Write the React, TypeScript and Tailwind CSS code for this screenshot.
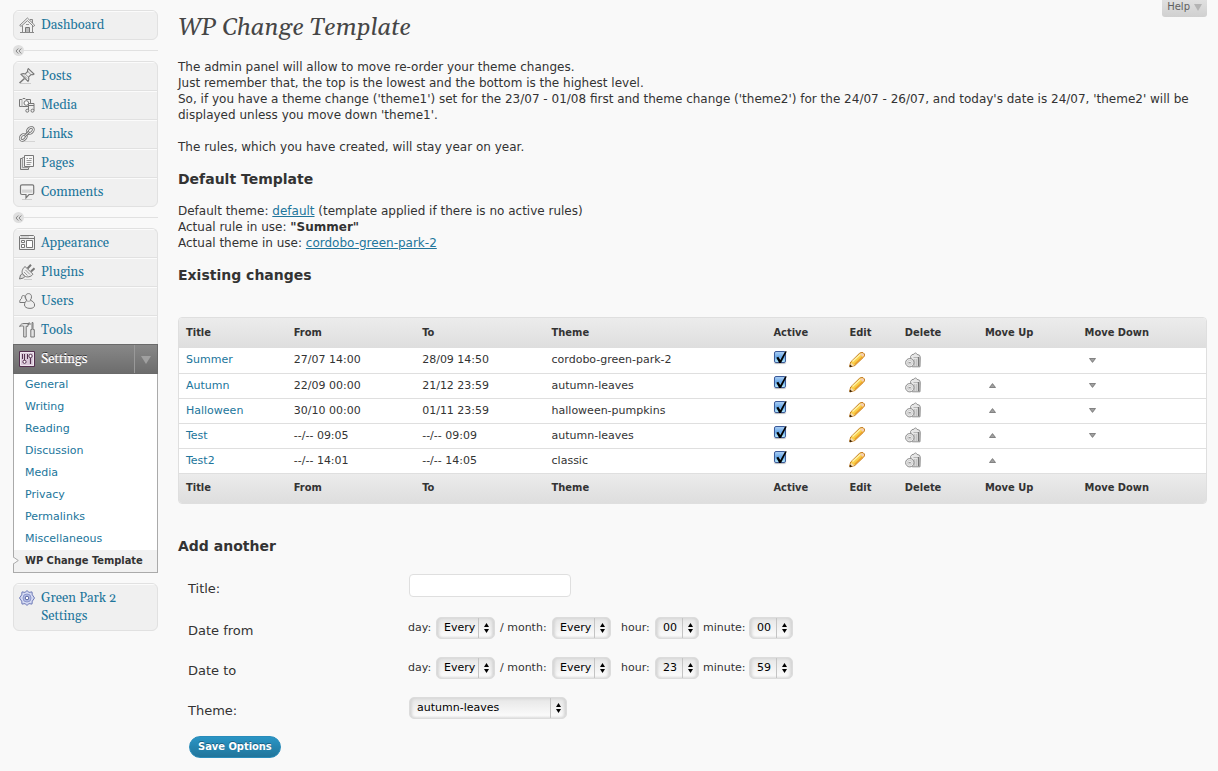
import type { ReactNode } from "react";

const ICON = "h-4 w-4 shrink-0";

function HomeIcon() {
  return (
    <svg viewBox="0 0 16 16" className={ICON} fill="none" stroke="#777" strokeWidth="1">
      <path d="M3.500 8.500V15M13.500 8.500V15M1 15.500h14" stroke="#888" />
      <path d="M11 2.500h2.500v4" fill="#ddd" stroke="#888" />
      <path d="M.7 8.400 8.400 1l7.400 7.400-1.300 1L8.400 3.600 2 9.400Z" fill="#f4f4f4" strokeWidth=".9" />
      <path d="M6.500 15V10.500h4V15" fill="#bbb" />
      <path d="M7 7.500h3" stroke="#999" />
    </svg>
  );
}

function PinIcon() {
  return (
    <svg viewBox="0 0 16 16" className={ICON} fill="none" stroke="#777" strokeWidth="1">
      <path d="M1 15.500h11" stroke="#ccc" />
      <path d="M5.500 10.500.5 15" strokeWidth="1.500" />
      <path d="M2 6.300c1.500-.9 3-.8 4.200-.4L8.700 3.500c-.3-1-.1-2 .6-2.900l5.700 5.400c-1 .8-2 .9-3 .6L9.500 9.200c.5 1.400.4 2.900-.5 4.200Z" fill="#eee" strokeWidth="1.100" />
      <path d="m6.200 6 3.300 3.200M9 3.700l2.900 2.800M5 7.500l3 3" stroke="#999" />
    </svg>
  );
}

function MediaIcon() {
  return (
    <svg viewBox="0 0 16 16" className={ICON} fill="none" stroke="#777" strokeWidth="1">
      <path d="M.5 2.500H3L4 1.500h2l1 1h4.500v7H.5Z" fill="#eee" />
      <path d="M3 2.500v7" stroke="#aaa" />
      <circle cx="7.300" cy="6" r="2.300" fill="#fff" />
      <path d="M9.500 13.500v-7h5.500v7M9.500 8.500H15" fill="#eee" />
      <circle cx="8.300" cy="13.700" r="1.500" fill="#eee" />
      <circle cx="13.500" cy="13.700" r="1.500" fill="#eee" />
    </svg>
  );
}

function LinkIcon() {
  return (
    <svg viewBox="0 0 16 16" className={ICON} fill="none">
      <path d="M3 15.500h13" stroke="#d4d4d4" />
      <g stroke="#777" strokeWidth="2.800">
        <ellipse cx="4.300" cy="11.300" rx="3.500" ry="2.400" transform="rotate(-45 4.300 11.300)" />
        <ellipse cx="11.300" cy="4.500" rx="3.500" ry="2.400" transform="rotate(-45 11.300 4.500)" />
      </g>
      <g stroke="#eee" strokeWidth="1">
        <ellipse cx="4.300" cy="11.300" rx="3.500" ry="2.400" transform="rotate(-45 4.300 11.300)" />
        <ellipse cx="11.300" cy="4.500" rx="3.500" ry="2.400" transform="rotate(-45 11.300 4.500)" />
      </g>
      <path d="m5.500 10.300 4.800-4.800" stroke="#777" strokeWidth="2.600" />
      <path d="m5.500 10.300 4.800-4.800" stroke="#e4e4e4" strokeWidth="1" />
    </svg>
  );
}

function PagesIcon() {
  return (
    <svg viewBox="0 0 16 16" className={ICON} fill="none" stroke="#777" strokeWidth="1">
      <path d="M1.500 3.500h8v11h-8Z" fill="#ddd" />
      <path d="M3.500 2.500h7v10h-7Z" fill="#e8e8e8" stroke="#999" />
      <path d="M5.500.5h9v11h-9Z" fill="#f7f7f7" />
      <path d="M7.500 3.500H9M10 3.500h3M7.500 5.500h5M7.500 7.500h5M7.500 9.500h4" stroke="#999" />
    </svg>
  );
}

function CommentIcon() {
  return (
    <svg viewBox="0 0 16 16" className={ICON} fill="none" stroke="#777" strokeWidth="1.200">
      <path d="M3 15.500h10" stroke="#ccc" strokeWidth="1" />
      <path d="M3 .8h10.500c.8 0 1.200.4 1.200 1.200v7c0 1-.4 1.500-1.400 1.500H10L7 14V10.500H3c-1 0-1.500-.5-1.500-1.500V2c0-.8.500-1.200 1.500-1.200Z" fill="#f2f2f2" />
      <path d="M3 5.500h10.500v3.300H3Z" fill="#d4d4d4" stroke="none" />
    </svg>
  );
}

function AppearanceIcon() {
  return (
    <svg viewBox="0 0 16 16" className={ICON} fill="none" stroke="#777" strokeWidth="1">
      <path d="M1.500.5h13l1 1v13H.5v-13Z" fill="#f0f0f0" />
      <path d="M1 3.500h14" />
      <path d="M2 2h8" stroke="#bbb" />
      <path d="M2.500 5.500h3v2h-3ZM2.500 9.500h3v3h-3ZM7.500 5.500h6v7h-6Z" fill="#fff" />
    </svg>
  );
}

function PluginIcon() {
  return (
    <svg viewBox="0 0 16 16" className={ICON} fill="none" stroke="#777" strokeWidth="1">
      <path d="M5 15.500h8" stroke="#ccc" />
      <path d="M.5 15 1.500 11l2-1.500 2.500 2.800L4.500 14Z" fill="#ddd" />
      <path d="M8.500 4.500 12 .8M12 7.500l3.500-3.200" strokeWidth="2" />
      <path d="M6 2.500 14 10.200C12 13 8 13.700 5.500 12L3.700 10C2.200 8 3.500 4.500 6 2.500Z" fill="#eee" />
      <path d="m6.500 6 4.500 4.500M5 8l3.500 3.500" stroke="#999" />
    </svg>
  );
}

function UsersIcon() {
  return (
    <svg viewBox="0 0 16 16" className={ICON} fill="#eee" stroke="#777" strokeWidth="1">
      <path d="M4.500 2.500c1.300 0 1.900 1 1.700 2.600 1 .8 1.500 2 1.300 4.400H.8C.4 8 1.300 6.200 2.700 5.300 2.400 3.500 3.200 2.500 4.500 2.500Z" />
      <path d="M9.500.6c1.900 0 3 1.300 3 3.200 0 1.400-.4 2.600-1.300 3.400C13.800 8 15.600 9.800 15.600 12c0 2-1.300 3.400-4.600 3.400S5.500 14 5.500 12c0-2 1-3.700 2.400-4.700-.9-.8-1.400-2-1.400-3.500 0-1.900 1.100-3.200 3-3.200Z" />
      <path d="M7.500 7.800c1.200.7 2.700.7 4 0" fill="none" stroke="#999" />
    </svg>
  );
}

function ToolsIcon() {
  return (
    <svg viewBox="0 0 16 16" className={ICON} fill="#e4e4e4" stroke="#777" strokeWidth="1">
      <path d="M.6 4.500C1.500 2.300 3 1.500 5 1.500h4v2.800H7.200V15H4.700V4.300C3 3.700 1.800 4 .6 4.500Z" />
      <path d="M9.500 3V1h1.500v2" />
      <path d="M13 .6h1v7h1.300V15h-3.500V7.600H13Z" />
    </svg>
  );
}

function SettingsIcon() {
  return (
    <svg viewBox="0 0 16 16" className={ICON} fill="none">
      <path d="M.5.5h15v15H.5Z" fill="#bda5bd" stroke="#54304f" />
      <path d="M1.500 1.500h13v13h-13Z" fill="#d9c8d9" stroke="#f0e6f0" />
      <path d="M5.500 3v7M3.500 3v5M8.500 3v5" stroke="#54304f" />
      <circle cx="5.500" cy="10.800" r="1.600" fill="#fff" stroke="#54304f" />
      <path d="M11.500 7v6" stroke="#54304f" strokeWidth="1.200" />
      <circle cx="11.500" cy="5" r="1.700" fill="#fff" stroke="#54304f" />
    </svg>
  );
}

function GearIcon() {
  return (
    <svg viewBox="0 0 16 16" className={ICON} fill="#d5daf2" stroke="#6f7bb8" strokeWidth="1">
      <path d="m8 .6 2 1.800 3-.5.300 2.900L15.500 8l-2.200 3.200-.3 2.900-3-.5L8 15.400l-2-1.800-3 .5-.3-2.900L.5 8l2.200-3.200L3 1.900l3 .5Z" />
      <circle cx="8" cy="8" r="4" fill="#b4bde6" stroke="#8d98cc" />
      <circle cx="8" cy="8" r="1.800" fill="#fff" stroke="#58649f" />
    </svg>
  );
}

function PencilIcon() {
  return (
    <svg viewBox="0 0 16 16" className="block h-4 w-4" fill="none">
      <path d="M10.300 1.500 11.800.6h2.200l1.500 1.500v1.700l-1 1.400-8.700 8.300-4.600 1.400-.6-.5 1.100-4.400Z" fill="#f9cf4a" stroke="#c07a24" strokeWidth="1" />
      <path d="m3.500 9.600 8-7.400" stroke="#fff3a8" strokeWidth="1.400" />
      <path d="m5.700 12.200 8.200-7.700" stroke="#eda02a" strokeWidth="1.300" />
      <path d="m11 2 1.200-.8h1.600l1.100 1.100v1.300l-1 1.300Z" fill="#f5cdb2" />
      <path d="m2 10.700 3.200 2.900-3.300.9-.8-.7Z" fill="#f6dcb0" />
      <path d="m.5 15.300.5-2.900 2.400 2.200Z" fill="#3a2408" />
    </svg>
  );
}

function TrashIcon() {
  return (
    <svg viewBox="0 0 16 16" className="block h-4 w-4" fill="none">
      <path d="M5.500 4.500 7 2.600l2-.4L10.500.7 12 2.400l2.500.8.8 2-.3 9.600H7.200Z" fill="#e6e6e6" stroke="#909090" />
      <path d="M8.500 5.500h5M9.200 7v7M11.200 7v7" stroke="#b5b5b5" />
      <path d="M13.600 5v9.300" stroke="#777" strokeWidth="1.500" />
      <circle cx="4.800" cy="10.700" r="4.200" fill="#ededed" stroke="#8a8a8a" />
      <circle cx="4.800" cy="10.700" r="2.400" stroke="#ccc" />
      <path d="M3.500 10.800h2.300" stroke="#777" />
    </svg>
  );
}

function Arrow({ dir }: { dir: "up" | "down" }) {
  return (
    <svg viewBox="0 0 7 5" className="block h-[5px] w-[7px]" fill="#a0a0a0" stroke="#707070" strokeWidth=".8">
      <path d={dir === "up" ? "M.5 4.500 3.500.6l3 3.900Z" : "M.5.5h6L3.500 4.400Z"} />
    </svg>
  );
}

const serif = "font-['Gelasio','DejaVu_Serif_Condensed',serif]";
const smallBold = "font-['DejaVu_Sans_Condensed','DejaVu_Sans',sans-serif] text-[11px] font-bold";

function MenuItem({ icon, label, last }: { icon: ReactNode; label: string; last?: boolean }) {
  return (
    <li className={last ? "" : "border-b border-[#e1e1e1]"}>
      <a href="#" className={`${serif} flex items-start gap-[6px] border-t border-[#fbfbfb] pr-2 pl-[5px] text-[13px] leading-[18px] text-[#21759b]`}>
        <span className="pt-[5px]">{icon}</span>
        <span className="pt-1 pb-[5px]">{label}</span>
      </a>
    </li>
  );
}

function Separator() {
  return (
    <div className="flex h-[21px] items-center">
      <button type="button" aria-label="Collapse menu" className="flex h-[11px] w-[11px] items-center justify-center rounded-full bg-[#dfdfdf]">
        <svg viewBox="0 0 7 6" className="h-[6px] w-[7px]" fill="none" stroke="#888">
          <path d="M3.300.5 1 3l2.300 2.500M6.300.5 4 3l2.300 2.500" />
        </svg>
      </button>
      <span className="h-px grow bg-[#e1e1e1]" />
    </div>
  );
}

const group = "overflow-hidden border border-[#e1e1e1] bg-[#f0f0f0]";
const submenu = ["General", "Writing", "Reading", "Discussion", "Media", "Privacy", "Permalinks", "Miscellaneous"];

function Sidebar() {
  return (
    <nav className="w-[145px] shrink-0 pt-[10px]">
      <ul className={`${group} rounded-[6px]`}>
        <MenuItem icon={<HomeIcon />} label="Dashboard" last />
      </ul>
      <Separator />
      <ul className={`${group} rounded-[6px]`}>
        <MenuItem icon={<PinIcon />} label="Posts" />
        <MenuItem icon={<MediaIcon />} label="Media" />
        <MenuItem icon={<LinkIcon />} label="Links" />
        <MenuItem icon={<PagesIcon />} label="Pages" />
        <MenuItem icon={<CommentIcon />} label="Comments" last />
      </ul>
      <Separator />
      <ul className={`${group} rounded-t-[6px] border-b-0`}>
        <MenuItem icon={<AppearanceIcon />} label="Appearance" />
        <MenuItem icon={<PluginIcon />} label="Plugins" />
        <MenuItem icon={<UsersIcon />} label="Users" />
        <MenuItem icon={<ToolsIcon />} label="Tools" last />
      </ul>
      <div className="flex h-[30px] items-stretch border border-[#6a6a6a] bg-linear-to-b from-[#888] to-[#6d6d6d]">
        <a href="#" className={`${serif} flex grow items-center gap-[6px] pl-[5px] text-[13px] leading-[18px] text-white [text-shadow:0_-1px_0_#333,0_0_1px_#fff]`}>
          <SettingsIcon />
          Settings
        </a>
        <button type="button" aria-label="Toggle settings menu" className="flex w-[23px] items-center justify-center border-l border-[#999]">
          <svg viewBox="0 0 10 8" className="mt-px h-2 w-[10px]" fill="#a0a0a0">
            <path d="M0 0h10L5 8Z" />
          </svg>
        </button>
      </div>
      <ul className="border border-t-0 border-[#aaa] bg-white text-[11px] leading-[22px]">
        {submenu.map((s) => (
          <li key={s} className="pl-[11px]">
            <a href="#" className="text-[#21759b]">{s}</a>
          </li>
        ))}
        <li className={`${smallBold} relative bg-[#f1f1f1] pl-[11px] whitespace-nowrap text-[#333]`}>
          <svg viewBox="0 0 6 9" className="absolute top-[6px] -left-px h-[9px] w-[6px]" fill="#f9f9f9" stroke="#aaa">
            <path d="M0 .8 5.300 4.500 0 8.200" />
          </svg>
          <a href="#">WP Change Template</a>
        </li>
      </ul>
      <ul className={`${group} mt-[10px] rounded-[6px]`}>
        <MenuItem icon={<GearIcon />} label="Green Park 2 Settings" last />
      </ul>
    </nav>
  );
}

const columns = ["Title", "From", "To", "Theme", "Active", "Edit", "Delete", "Move Up", "Move Down"];
const colWidths = ["w-[10.4%]", "w-[12.5%]", "w-[12.6%]", "w-[21.6%]", "w-[7.4%]", "w-[5.4%]", "w-[7.8%]", "w-[9.7%]", "w-[12.6%]"];
const rules = [
  ["Summer", "27/07 14:00", "28/09 14:50", "cordobo-green-park-2"],
  ["Autumn", "22/09 00:00", "21/12 23:59", "autumn-leaves"],
  ["Halloween", "30/10 00:00", "01/11 23:59", "halloween-pumpkins"],
  ["Test", "--/-- 09:05", "--/-- 09:09", "autumn-leaves"],
  ["Test2", "--/-- 14:01", "--/-- 14:05", "classic"],
];

function HeadRow() {
  return (
    <tr className="h-[30px] bg-linear-to-b from-[#ececec] to-[#dedede]">
      {columns.map((c, i) => (
        <th key={c} scope="col" className={`${colWidths[i]} ${smallBold} text-left ${i === 0 ? "pl-[7px]" : "pl-2"}`}>{c}</th>
      ))}
    </tr>
  );
}

function RulesTable() {
  return (
    <div className="overflow-hidden rounded-[4px] border border-[#dfdfdf] bg-white">
      <table className="w-full table-fixed text-[11px] leading-4 text-[#333]">
        <thead><HeadRow /></thead>
        <tbody>
          {rules.map((r, i) => (
            <tr key={r[0]} className="h-[25px] border-b border-[#dfdfdf]">
              <td className="pl-[7px]"><a href="#" className="text-[#21759b]">{r[0]}</a></td>
              <td className="pl-2">{r[1]}</td>
              <td className="pl-2">{r[2]}</td>
              <td className="pl-2">{r[3]}</td>
              <td className="pb-[6px] pl-2">
                <label className="relative block h-[15px] w-[15px]">
                  <input
                    type="checkbox"
                    defaultChecked
                    aria-label={`${r[0]} active`}
                    className="peer mt-[2px] ml-px block h-3 w-3 appearance-none rounded-[2px] border border-[#3c5a99] bg-linear-to-b from-[#a9cdf3] via-[#6aa9e8] to-[#b5ecff] shadow-[0_1px_1px_#bbb]"
                  />
                  <svg viewBox="0 0 15 15" className="pointer-events-none absolute inset-0 hidden peer-checked:block" fill="#000">
                    <path d="m3.300 6.800 2-1 2 3.200L12.300.3l1.500.2L8 12H6.200Z" />
                  </svg>
                </label>
              </td>
              <td className="pb-px pl-2"><a href="#" aria-label={`Edit ${r[0]}`} className="block w-4"><PencilIcon /></a></td>
              <td className="pb-px pl-2"><a href="#" aria-label={`Delete ${r[0]}`} className="block w-4"><TrashIcon /></a></td>
              <td className="pl-3">{i > 0 && <a href="#" aria-label={`Move ${r[0]} up`} className="block w-[7px]"><Arrow dir="up" /></a>}</td>
              <td className="pl-3">{i < rules.length - 1 && <a href="#" aria-label={`Move ${r[0]} down`} className="block w-[7px]"><Arrow dir="down" /></a>}</td>
            </tr>
          ))}
        </tbody>
        <tfoot><HeadRow /></tfoot>
      </table>
    </div>
  );
}

function Select({ id, value, width }: { id: string; value: string; width: string }) {
  return (
    <span className={`relative inline-block h-[22px] ${width}`}>
      <select
        id={id}
        defaultValue={value}
        className="block h-full w-full appearance-none rounded-[5px] border border-[#dcdcdc] bg-linear-to-b from-[#e6e6e6] to-[#fdfdfd] pl-[7px] text-[11px] text-black shadow-[inset_2px_0_3px_#d4d4d4,inset_-2px_0_3px_#d4d4d4]"
      >
        <option>{value}</option>
      </select>
      <span className="pointer-events-none absolute inset-y-px right-px flex w-4 items-center justify-center border-l border-[#c4c4c4]">
        <svg viewBox="0 0 5 10" className="h-[10px] w-[5px]" fill="#000">
          <path d="M0 4 2.500 0 5 4ZM0 6h5L2.500 10Z" />
        </svg>
      </span>
    </span>
  );
}

const formLabel = "w-[230px] pt-[6px] pl-[10px] text-[13px]";

function DateRow({ label, id, hour, minute }: { label: string; id: string; hour: string; minute: string }) {
  return (
    <div role="group" aria-label={label} className="flex h-10 items-center">
      <span className={formLabel}>{label}</span>
      <div className="flex items-center text-[11px]">
        <label htmlFor={`${id}-day`} className="w-7">day:</label>
        <Select id={`${id}-day`} value="Every" width="w-[59px]" />
        <label htmlFor={`${id}-month`} className="w-[57px] pl-[5px] whitespace-nowrap">/ month:</label>
        <Select id={`${id}-month`} value="Every" width="w-[59px]" />
        <label htmlFor={`${id}-hour`} className="w-11 pl-[10px]">hour:</label>
        <Select id={`${id}-hour`} value={hour} width="w-11" />
        <label htmlFor={`${id}-minute`} className="w-[50px] pl-1">minute:</label>
        <Select id={`${id}-minute`} value={minute} width="w-11" />
      </div>
    </div>
  );
}

const heading = "text-[14px] leading-[18px] font-bold text-[#333]";
const link = "text-[#21759b] underline";

export default function App() {
  return (
    <div className="min-h-screen bg-[#f9f9f9] pr-[11px] pl-[13px] font-['DejaVu_Sans',sans-serif] text-[12px] leading-4 text-[#333]">
      <div className="flex gap-5">
        <Sidebar />
        <main className="min-w-0 grow">
          <header className="relative pt-[11px]">
            <h1 className={`${serif} text-[24px] leading-[34px] text-[#464646] italic`}>WP Change Template</h1>
            <button type="button" className="absolute top-0 right-0 flex h-[17px] items-center gap-1 rounded-b-[3px] bg-linear-to-b from-[#e0e0e0] to-[#d0d0d0] px-[5px] pb-[4px] text-[10px] text-[#606060]">
              Help
              <svg viewBox="0 0 8 7" className="mt-px h-[7px] w-2" fill="#b4b4b4">
                <path d="M0 0h8L4 7Z" />
              </svg>
            </button>
          </header>
          <p className="mt-[14px]">
            The admin panel will allow to move re-order your theme changes.
            <br />
            Just remember that, the top is the lowest and the bottom is the highest level.
            <br />
            So, if you have a theme change ('theme1') set for the 23/07 - 01/08 first and theme change ('theme2') for the 24/07 - 26/07, and today's date is 24/07, 'theme2' will be displayed unless you move down 'theme1'.
          </p>
          <p className="mt-4">The rules, which you have created, will stay year on year.</p>
          <h2 className={`${heading} mt-[15px]`}>Default Template</h2>
          <p className="mt-[15px]">
            Default theme: <a href="#" className={link}>default</a> (template applied if there is no active rules)
            <br />
            Actual rule in use: <b>"Summer"</b>
            <br />
            Actual theme in use: <a href="#" className={link}>cordobo-green-park-2</a>
          </p>
          <h2 className={`${heading} mt-[15px] mb-[33px]`}>Existing changes</h2>
          <RulesTable />
          <h2 className={`${heading} mt-[33px]`}>Add another</h2>
          <form className="mt-[11px]" onSubmit={(e) => e.preventDefault()}>
            <div className="flex h-[42px] items-center pb-[3px]">
              <label htmlFor="title" className={formLabel}>Title:</label>
              <input id="title" type="text" className="ml-px h-[23px] w-[162px] rounded-[4px] border border-[#dfdfdf] bg-white px-1" />
            </div>
            <DateRow label="Date from" id="from" hour="00" minute="00" />
            <DateRow label="Date to" id="to" hour="23" minute="59" />
            <div className="flex h-10 items-center">
              <label htmlFor="theme" className={formLabel}>Theme:</label>
              <span className="ml-px flex"><Select id="theme" value="autumn-leaves" width="w-[158px]" /></span>
            </div>
            <button type="submit" className={`${smallBold} mt-2 ml-[11px] h-[22px] rounded-full border border-[#298cba] bg-linear-to-b from-[#2a95c5] to-[#21759b] px-2 whitespace-nowrap text-white [text-shadow:0_-1px_0_#1a5f80]`}>
              Save Options
            </button>
          </form>
        </main>
      </div>
    </div>
  );
}
